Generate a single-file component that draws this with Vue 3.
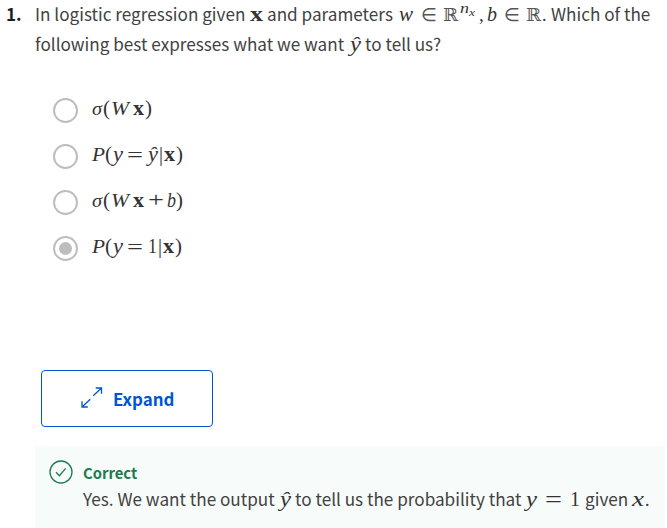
<script setup>
// Glyph tuples: text, x, baseline y, font size, class, optional set width
const wInReals = [
  ['w', 0, 21, 21, 'it', 14], ['∈', 22, 21, 18, 'sans', 16], ['ℝ', 44, 21, 18, 'sym', 15],
  ['n', 61, 13, 15, 'it', 9], ['x', 70, 16, 11, 'it', 6], [',', 80, 21, 19, ''],
  ['b', 88, 21, 20, 'it', 10], ['∈', 105, 21, 18, 'sans', 16], ['ℝ', 127, 21, 18, 'sym', 15], ['.', 143, 21, 18, '']
]
const boldX = [['x', 0, 21, 22, 'bf', 13]]
const yHat = [['ŷ', 0, 21, 21, 'it', 11]]
const yOne = [['y', 0, 21, 20, 'it', 11], ['=', 19, 22, 23, '', 17], ['1', 44, 21, 21, '', 10]]
const onlyX = [['x', 0, 21, 21, 'it', 12], ['.', 13, 21, 18, '']]

const options = [
  { checked: false, math: [['σ', 0, 20, 19, 'it', 10], ['(', 11, 20, 20, '', 7], ['W', 19, 20, 19, 'it', 18], ['x', 41, 20, 20, 'bf', 11], [')', 53, 20, 20, '', 7]] },
  { checked: false, math: [['P', 0, 20, 19, 'it', 13], ['(', 13, 20, 20, '', 7], ['y', 21, 20, 20, 'it', 10], ['=', 35, 21, 22, '', 16], ['ŷ', 56, 20, 20, 'it', 10], ['|', 67, 20, 20, ''], ['x', 72, 20, 20, 'bf', 11], [')', 84, 20, 20, '', 7]] },
  { checked: false, math: [['σ', 0, 20, 19, 'it', 10], ['(', 11, 20, 20, '', 7], ['W', 19, 20, 19, 'it', 18], ['x', 41, 20, 20, 'bf', 11], ['+', 56, 20, 22, '', 16], ['b', 75, 20, 20, 'it', 9], [')', 84, 20, 20, '', 7]] },
  { checked: true, math: [['P', 0, 20, 19, 'it', 13], ['(', 13, 20, 20, '', 7], ['y', 21, 20, 20, 'it', 10], ['=', 35, 21, 22, '', 16], ['1', 56, 20, 20, '', 9], ['|', 66, 20, 20, ''], ['x', 71, 20, 20, 'bf', 11], [')', 83, 20, 20, '', 7]] }
]

const line1 = [
  { text: 'In logistic regression given', w: 215 }, { math: boldX, w: 17 },
  { text: 'and parameters', w: 132 }, { math: wInReals, w: 152 }, { text: 'Which of the', w: 110 }
]
const line2 = [
  { text: 'following best expresses what we want', w: 315 }, { math: yHat, w: 15 }, { text: 'to tell us?', w: 90 }
]
const answer = [
  { text: 'Yes. We want the output', w: 197 }, { math: yHat, w: 15 },
  { text: 'to tell us the probability that', w: 231 }, { math: yOne, w: 59 },
  { text: 'given', w: 47 }, { math: onlyX, w: 20 }
]
</script>

<template>
  <main class="quiz">
    <section class="question">
      <b class="number">1.</b>
      <div class="prompt">
        <div v-for="(line, i) in [line1, line2]" :key="i" class="line">
          <span v-for="(run, j) in line" :key="j" class="run" :style="{ width: run.w + 'px' }">
            <svg v-if="run.math" class="math" :width="run.w" height="27">
              <text v-for="(g, k) in run.math" :key="k" :x="g[1]" :y="g[2]" :font-size="g[3]" :class="g[4]" :textLength="g[5]" lengthAdjust="spacingAndGlyphs">{{ g[0] }}</text>
            </svg>
            <template v-else>{{ run.text }}</template>
          </span>
        </div>
      </div>
    </section>

    <div class="options">
      <label v-for="(o, i) in options" :key="i" class="option">
        <span class="radio" :class="{ checked: o.checked }"></span>
        <svg class="math" width="100" height="30">
          <text v-for="(g, k) in o.math" :key="k" :x="g[1]" :y="g[2]" :font-size="g[3]" :class="g[4]" :textLength="g[5]" lengthAdjust="spacingAndGlyphs">{{ g[0] }}</text>
        </svg>
      </label>
    </div>

    <button class="expand">
      <svg width="22" height="22" viewBox="0 0 22 22" fill="none" stroke="currentColor" stroke-width="1.3">
        <path d="M12.2 8.8 20.5 1M14.7 1H20.5V6.8M9.3 12.2 1 20M1 14.2V20H6.8" />
      </svg>
      <span>Expand</span>
    </button>

    <section class="feedback">
      <svg class="tick" width="24" height="24" viewBox="0 0 24 24" fill="none" stroke="currentColor" stroke-width="1.3">
        <circle cx="12" cy="12" r="11" />
        <path d="m7 12.3 3.4 3.4 6.3-7.3" />
      </svg>
      <div class="result">
        <b class="verdict">Correct</b>
        <div class="line">
          <span v-for="(run, j) in answer" :key="j" class="run" :style="{ width: run.w + 'px' }">
            <svg v-if="run.math" class="math" :width="run.w" height="27">
              <text v-for="(g, k) in run.math" :key="k" :x="g[1]" :y="g[2]" :font-size="g[3]" :class="g[4]" :textLength="g[5]" lengthAdjust="spacingAndGlyphs">{{ g[0] }}</text>
            </svg>
            <template v-else>{{ run.text }}</template>
          </span>
        </div>
      </div>
    </section>
  </main>
</template>

<style>
body { background: #fff; }
</style>

<style scoped>
.quiz {
  box-sizing: border-box;
  width: 667px;
  height: 528px;
  overflow: hidden;
  color: #424242;
  font: 400 17.15px/27px "Noto Sans CJK SC", sans-serif;
}
.question { display: flex; height: 57px; }
.number { box-sizing: border-box; width: 35px; padding-left: 6px; color: #1f1f1f; flex: none; font-weight: 700; }
.prompt { display: flex; flex-direction: column; gap: 3px; }
.line { display: flex; height: 27px; }
.run { flex: none; white-space: nowrap; }
.math { display: block; overflow: visible; fill: #333; font-family: "Liberation Serif", serif; font-weight: 400; }
.it { font-style: italic; }
.bf { font-weight: bold; }
.sym { font-family: "DejaVu Serif", "DejaVu Sans", serif; fill: #555; }
.sans { font-family: "DejaVu Sans", sans-serif; fill: #555; }
.options { display: flex; flex-direction: column; padding: 30px 0 0 53px; }
.option { display: flex; align-items: center; gap: 14px; height: 46px; }
.radio {
  display: flex;
  box-sizing: border-box;
  width: 25px;
  height: 25px;
  border: 2px solid #bdbdbd;
  border-radius: 50%;
}
.radio.checked::after {
  content: "";
  width: 13px;
  height: 13px;
  margin: auto;
  border-radius: 50%;
  background: #bdbdbd;
}
.expand {
  display: flex;
  box-sizing: border-box;
  align-items: center;
  gap: 10px;
  width: 172px;
  height: 57px;
  margin: 99px 0 0 41px;
  padding: 0 0 1px 39px;
  border: 1px solid #0056d2;
  border-radius: 4px;
  background: #fff;
  color: #0056d2;
  font: bold 16.9px/27px "Noto Sans CJK SC", sans-serif;
}
.feedback {
  display: flex;
  box-sizing: border-box;
  gap: 10px;
  width: 630px;
  height: 82px;
  margin: 19px 0 0 35px;
  padding: 14px 0 0 14px;
  background: #f7fbf9;
}
.tick { flex: none; color: #1d7c50; }
.result { margin-top: -1px; }
.verdict { display: block; height: 26px; color: #1d7c50; font-size: 14.8px; font-weight: 700; }
</style>
